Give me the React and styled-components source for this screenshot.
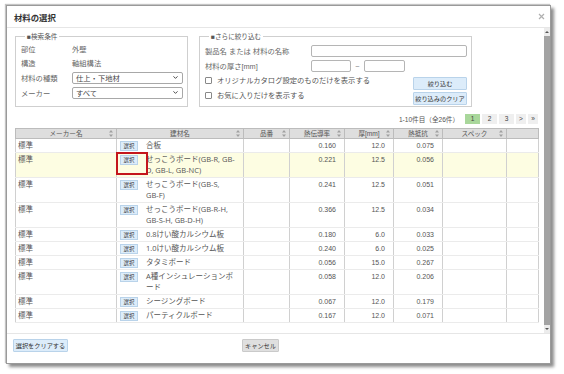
import React from 'react'
import styled, { createGlobalStyle } from 'styled-components'
import { ChevronDown } from 'lucide-react'

const Global = createGlobalStyle`
  html, body {
    margin: 0;
    padding: 0;
    background: #fff;
  }
  body {
    font-family: "Liberation Sans", "Noto Sans CJK JP", sans-serif;
    font-size: 7.3px;
    color: #555;
  }
  * { box-sizing: border-box; }
`

const Page = styled.div`
  width: 564px;
  height: 374px;
  padding: 5px 0 0 6px;
`
const Dialog = styled.div`
  width: 545px;
  height: 359px;
  border: 1px solid #9a9a9a;
  box-shadow: -1px -1px 1px #c4c4c4, 3px 3px 3px rgba(0,0,0,.45);
  background: #fff;
  display: flex;
  flex-direction: column;
`
const Header = styled.div`
  height: 22px;
  flex: none;
  border-bottom: 1px solid #e6e6e6;
  display: flex;
  align-items: center;
  justify-content: space-between;
  padding: 0 5px 0 7px;
`
const Title = styled.h1`
  margin: 0;
  font-size: 8.4px;
  font-weight: 700;
  color: #333;
  font-family: "Noto Sans CJK JP", sans-serif;
`
const Body = styled.div`
  flex: none;
  height: 305px;
  display: flex;
`
const Content = styled.div`
  flex: 1;
  min-width: 0;
  padding: 3px 6px 0 8px;
`
const ScrollBar = styled.div`
  width: 6px;
  flex: none;
  display: flex;
  flex-direction: column;
  background: #ececec;
`
const ScrollArrow = styled.div`
  height: 8px;
  display: flex;
  align-items: center;
  justify-content: center;
  &::before {
    content: '';
    border-left: 2px solid transparent;
    border-right: 2px solid transparent;
    ${p => p.$down ? 'border-top: 2px solid #555;' : 'border-bottom: 2px solid #555;'}
  }
`
const Thumb = styled.div`
  flex: 1;
  background: #a3a3a3;
`
const FilterRow = styled.div`
  display: flex;
  gap: 11px;
`
const Fieldset = styled.fieldset`
  margin: 0;
  min-width: 0;
  width: ${p => p.$w}px;
  border: 1px solid #cfcfcf;
  padding: ${p => p.$pad};
`
const Legend = styled.legend`
  font-size: 6.6px;
  line-height: 11px;
  color: #555;
  padding: 0 2px;
  margin-left: 4px;
`
const InfoRow = styled.div`
  display: flex;
  align-items: center;
  height: ${p => p.$h || 14}px;
`
const Label = styled.span`
  width: ${p => p.$w}px;
  flex: none;
  color: #666;
  white-space: nowrap;
`
const Value = styled.span`
  color: #666;
`
const Select = styled.div`
  flex: 1;
  height: 12px;
  border: 1px solid #a8a8a8;
  border-radius: 2px;
  display: flex;
  align-items: center;
  justify-content: space-between;
  padding: 0 3px;
  color: #444;
`
const FieldRow = styled.div`
  display: flex;
  align-items: center;
  height: 12px;
  margin-top: ${p => p.$mt}px;
`
const TextInput = styled.input`
  width: ${p => p.$w}px;
  height: 12px;
  margin: 0;
  padding: 0 2px;
  border: 1px solid #b5b5b5;
  border-radius: 2px;
  background: #fff;
  font-size: 7px;
  outline: none;
`
const Tilde = styled.span`
  width: 13px;
  text-align: center;
  color: #777;
  font-family: "Liberation Sans", sans-serif;
`
const CheckRow = styled.div`
  display: flex;
  justify-content: space-between;
  align-items: flex-start;
  margin-top: ${p => p.$mt}px;
`
const Check = styled.label`
  display: flex;
  align-items: center;
  gap: 5px;
  color: #555;
  line-height: 11px;
  margin-top: -2px;
  white-space: nowrap;
`
const Box = styled.span`
  width: 7px;
  height: 7px;
  border: 1px solid #888;
  border-radius: 1px;
  background: #fff;
`
const Button = styled.button`
  margin: 0;
  height: 13px;
  width: ${p => p.$w ? p.$w + 'px' : 'auto'};
  padding: 0;
  font-family: "Noto Sans CJK JP", sans-serif;
  font-size: 6.2px;
  line-height: 11px;
  white-space: nowrap;
  color: #333;
  border: 1px solid ${p => p.$gray ? '#cacaca' : '#b9d3ea'};
  background: ${p => p.$gray ? '#dfdfdf' : '#dcecfa'};
  border-radius: 1px;
  cursor: pointer;
`
const Pager = styled.div`
  display: flex;
  justify-content: flex-end;
  align-items: center;
  gap: 2px;
  height: 11px;
  margin: 6px 0 4px;
`
const PageInfo = styled.span`
  margin-right: 4px;
  color: #555;
  font-size: 6.6px;
  white-space: nowrap;
`
const PageLink = styled.span`
  width: ${p => p.$w || 15}px;
  height: 10px;
  display: flex;
  align-items: center;
  justify-content: center;
  background: ${p => p.$active ? '#a9d79b' : '#efefef'};
  color: #444;
  font-size: 6.6px;
`
const Table = styled.table`
  width: 523px;
  border-collapse: collapse;
  table-layout: fixed;
  border: 1px solid #b9b9b9;
`
const Th = styled.th`
  background: #dedede;
  border: 1px solid #bcbcbc;
  font-weight: normal;
  font-size: 6.6px;
  line-height: 9px;
  color: #555;
  padding: 0 2px;
`
const HeadInner = styled.div`
  display: grid;
  grid-template-columns: 5px 1fr 5px;
  align-items: center;
`
const Tr = styled.tr`
  background: ${p => p.$active ? '#fdfde2' : '#fff'};
`
const Td = styled.td`
  border-left: 1px solid #d0d0d0;
  border-right: 1px solid #d0d0d0;
  border-bottom: 1px solid #ebebeb;
  padding: 1px ${p => p.$num ? '8px' : '2px'} 1px 2px;
  line-height: 11px;
  vertical-align: top;
  text-align: ${p => p.$num ? 'right' : 'left'};
  color: #555;
  font-size: ${p => p.$num ? '7px' : '7.5px'};
`
const NameCell = styled.div`
  display: flex;
  align-items: flex-start;
  padding-left: 1px;
`
const PickButton = styled.span`
  position: relative;
  flex: none;
  width: 18px;
  height: 10px;
  margin: 1px 8px 0 0;
  display: flex;
  align-items: center;
  justify-content: center;
  font-family: "Noto Sans CJK JP", sans-serif;
  font-size: 5.4px;
  color: #333;
  background: #dcecfa;
  border: 1px solid #b9d3ea;
  &::after {
    content: '';
    display: ${p => p.$marked ? 'block' : 'none'};
    position: absolute;
    top: -4px;
    left: -5px;
    width: 28px;
    height: 19px;
    border: 2px solid #c4161c;
  }
`
const NameText = styled.span`
  white-space: pre-line;
  font-family: "Open Sans", "Noto Sans CJK JP", sans-serif;
`
const Footer = styled.div`
  flex: 1;
  border-top: 1px solid #e6e6e6;
  padding: 5px 6px 0;
  display: flex;
  align-items: flex-start;
  gap: 174px;
`

const SortIcon = () => (
  <svg width="4" height="7" viewBox="0 0 4 7">
    <path d="M2 0 L4 2.6 H0 Z M2 7 L0 4.4 H4 Z" fill="#a0a0a0" />
  </svg>
)

const CloseIcon = () => (
  <svg width="7" height="7" viewBox="0 0 7 7">
    <path d="M1 1 L6 6 M6 1 L1 6" stroke="#b0b0b0" strokeWidth="1.2" />
  </svg>
)

const columns = [
  { label: 'メーカー名', w: 101, sort: true },
  { label: '建材名', w: 127, sort: true },
  { label: '品番', w: 46, sort: true },
  { label: '熱伝導率', w: 55, sort: true },
  { label: '厚[mm]', w: 49, sort: true },
  { label: '熱抵抗', w: 49, sort: true },
  { label: 'スペック', w: 64, sort: true },
  { label: '', w: 32, sort: false },
]

const rows = [
  { maker: '標準', name: '合板', k: '0.160', t: '12.0', r: '0.075' },
  { maker: '標準', name: 'せっこうボード(GB-R, GB-\nD, GB-L, GB-NC)', k: '0.221', t: '12.5', r: '0.056', active: true },
  { maker: '標準', name: 'せっこうボード(GB-S,\nGB-F)', k: '0.241', t: '12.5', r: '0.051' },
  { maker: '標準', name: 'せっこうボード(GB-R-H,\nGB-S-H, GB-D-H)', k: '0.366', t: '12.5', r: '0.034' },
  { maker: '標準', name: '0.8けい酸カルシウム板', k: '0.180', t: '6.0', r: '0.033' },
  { maker: '標準', name: '1.0けい酸カルシウム板', k: '0.240', t: '6.0', r: '0.025' },
  { maker: '標準', name: 'タタミボード', k: '0.056', t: '15.0', r: '0.267' },
  { maker: '標準', name: 'A種インシュレーションボ\nード', k: '0.058', t: '12.0', r: '0.206' },
  { maker: '標準', name: 'シージングボード', k: '0.067', t: '12.0', r: '0.179' },
  { maker: '標準', name: 'パーティクルボード', k: '0.167', t: '12.0', r: '0.071' },
]

export default function App() {
  return (
    <Page>
      <Global />
      <Dialog>
        <Header>
          <Title>材料の選択</Title>
          <CloseIcon />
        </Header>
        <Body>
          <Content>
            <FilterRow>
              <Fieldset $w={173} $pad="0 4px 6px 5px">
                <Legend>■検索条件</Legend>
                <InfoRow>
                  <Label $w={51}>部位</Label>
                  <Value>外壁</Value>
                </InfoRow>
                <InfoRow>
                  <Label $w={51}>構造</Label>
                  <Value>軸組構法</Value>
                </InfoRow>
                <InfoRow $h={15}>
                  <Label $w={51}>材料の種類</Label>
                  <Select>仕上・下地材<ChevronDown size={7} strokeWidth={3} color="#333" /></Select>
                </InfoRow>
                <InfoRow $h={15}>
                  <Label $w={51}>メーカー</Label>
                  <Select>すべて<ChevronDown size={7} strokeWidth={3} color="#333" /></Select>
                </InfoRow>
              </Fieldset>
              <Fieldset $w={273} $pad="0 4px 1px 5px">
                <Legend>■さらに絞り込む</Legend>
                <FieldRow $mt={3}>
                  <Label $w={106}>製品名 または 材料の名称</Label>
                  <TextInput $w={156} readOnly />
                </FieldRow>
                <FieldRow $mt={3}>
                  <Label $w={106}>材料の厚さ[mm]</Label>
                  <TextInput $w={40} readOnly />
                  <Tilde>~</Tilde>
                  <TextInput $w={41} readOnly />
                </FieldRow>
                <CheckRow $mt={5}>
                  <Check><Box />オリジナルカタログ設定のものだけを表示する</Check>
                  <Button $w={54}>絞り込む</Button>
                </CheckRow>
                <CheckRow $mt={2}>
                  <Check><Box />お気に入りだけを表示する</Check>
                  <Button $w={54}>絞り込みのクリア</Button>
                </CheckRow>
              </Fieldset>
            </FilterRow>
            <Pager>
              <PageInfo>1-10件目（全26件）</PageInfo>
              <PageLink $active>1</PageLink>
              <PageLink>2</PageLink>
              <PageLink>3</PageLink>
              <PageLink $w={10}>&gt;</PageLink>
              <PageLink $w={10}>»</PageLink>
            </Pager>
            <Table>
              <colgroup>
                {columns.map((c, i) => <col key={i} style={{ width: c.w }} />)}
              </colgroup>
              <thead>
                <tr>
                  {columns.map((c, i) => (
                    <Th key={i}>
                      <HeadInner>
                        <span />
                        <span>{c.label}</span>
                        {c.sort ? <SortIcon /> : <span />}
                      </HeadInner>
                    </Th>
                  ))}
                </tr>
              </thead>
              <tbody>
                {rows.map((r, i) => (
                  <Tr key={i} $active={r.active}>
                    <Td>{r.maker}</Td>
                    <Td>
                      <NameCell>
                        <PickButton $marked={r.active}>選択</PickButton>
                        <NameText>{r.name}</NameText>
                      </NameCell>
                    </Td>
                    <Td></Td>
                    <Td $num>{r.k}</Td>
                    <Td $num>{r.t}</Td>
                    <Td $num>{r.r}</Td>
                    <Td></Td>
                    <Td></Td>
                  </Tr>
                ))}
              </tbody>
            </Table>
          </Content>
          <ScrollBar>
            <ScrollArrow />
            <Thumb />
            <ScrollArrow $down />
          </ScrollBar>
        </Body>
        <Footer>
          <Button $w={55}>選択をクリアする</Button>
          <Button $w={37} $gray>キャンセル</Button>
        </Footer>
      </Dialog>
    </Page>
  )
}
